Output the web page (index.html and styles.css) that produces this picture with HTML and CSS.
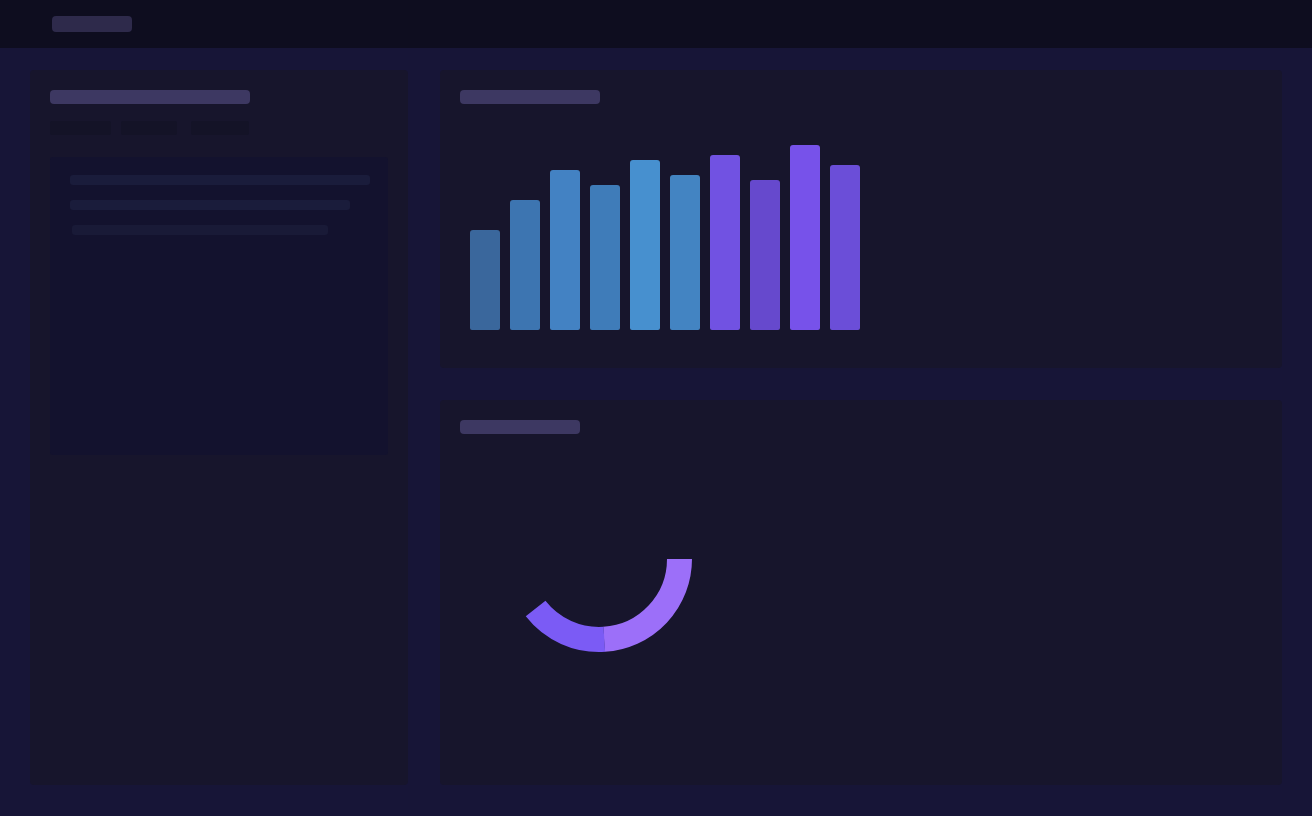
FILE: index.html
```html
<!DOCTYPE html>
<html lang="en">
<head>
<meta charset="utf-8">
<title>Dashboard</title>
<link rel="stylesheet" href="styles.css">
</head>
<body>
<header class="topbar"><div class="logo"></div></header>
<main class="layout">
  <section class="card side">
    <div class="sk title-lg"></div>
    <div class="tabs"><span class="tab t1"></span><span class="tab t2"></span><span class="tab t3"></span></div>
    <div class="inner">
      <div class="line l1"></div>
      <div class="line l2"></div>
      <div class="line l3"></div>
    </div>
  </section>
  <div class="right">
    <section class="card chart">
      <div class="sk title-md"></div>
      <div class="bars">
        <div class="bar" style="height:100px;background:#3a679c"></div>
        <div class="bar" style="height:130px;background:#3d75b1"></div>
        <div class="bar" style="height:160px;background:#4382c3"></div>
        <div class="bar" style="height:145px;background:#3f7cb9"></div>
        <div class="bar" style="height:170px;background:#4790cf"></div>
        <div class="bar" style="height:155px;background:#4384c2"></div>
        <div class="bar" style="height:175px;background:#7152e2"></div>
        <div class="bar" style="height:150px;background:#6649cd"></div>
        <div class="bar" style="height:185px;background:#7752ea"></div>
        <div class="bar" style="height:165px;background:#6b4ed8"></div>
      </div>
    </section>
    <section class="card donut-card">
      <div class="sk title-sm"></div>
      <svg class="donut" width="240" height="240" viewBox="0 0 240 240">
        <path d="M 200.5 120 A 80.5 80.5 0 0 1 125.05 200.34" fill="none" stroke="#9c6ff9" stroke-width="25"/>
        <path d="M 125.3 200.33 A 80.5 80.5 0 0 1 56.6 169.56" fill="none" stroke="#7b5bf5" stroke-width="25"/>
      </svg>
    </section>
  </div>
</main>
</body>
</html>
```

FILE: styles.css
```css
* { box-sizing: border-box; }
html, body { margin: 0; padding: 0; }
body {
  width: 1312px;
  height: 816px;
  overflow: hidden;
  background: #171537;
  font-family: "Inter", "Liberation Sans", sans-serif;
}
.topbar {
  height: 48px;
  background: #0e0d1f;
  display: flex;
  align-items: center;
  padding-left: 52px;
}
.logo {
  width: 80px;
  height: 16px;
  border-radius: 4px;
  background: #2e2a4b;
}
.layout {
  display: grid;
  grid-template-columns: 378px 842px;
  gap: 32px;
  padding: 22px 30px 31px 30px;
  height: 768px;
}
.card {
  background: #17152c;
  border-radius: 4px;
}
.side {
  padding: 20px 20px;
}
.sk {
  height: 14px;
  border-radius: 4px;
  background: #3d3862;
}
.title-lg { width: 200px; }
.title-md { width: 140px; }
.title-sm { width: 120px; }
.tabs {
  display: flex;
  gap: 12px;
  margin-top: 17px;
  height: 14px;
}
.tab { display: block; height: 14px; background: #141327; border-radius: 2px; }
.t1 { width: 61px; }
.t2 { width: 56px; margin-left: -2px; }
.t3 { width: 58px; margin-left: 2px; }
.inner {
  margin-top: 22px;
  height: 298px;
  background: #13122e;
  border-radius: 3px;
  padding: 18px 20px;
  display: flex;
  flex-direction: column;
  gap: 15px;
}
.line { height: 10px; border-radius: 3px; background: #1a1c3b; }
.l1 { width: 300px; }
.l2 { width: 280px; }
.l3 { width: 256px; margin-left: 2px; background: #191a37; }
.right {
  display: grid;
  grid-template-rows: 298px 385px;
  gap: 32px;
}
.chart, .donut-card { padding: 20px; }
.bars {
  display: flex;
  align-items: flex-end;
  gap: 10px;
  height: 226px;
  padding-left: 10px;
}
.bar {
  width: 30px;
  border-radius: 3px 3px 2px 2px;
}
.donut-card { display: flex; flex-direction: column; }
.donut {
  display: block;
  margin-left: 19px;
  margin-top: 5px;
}
```
